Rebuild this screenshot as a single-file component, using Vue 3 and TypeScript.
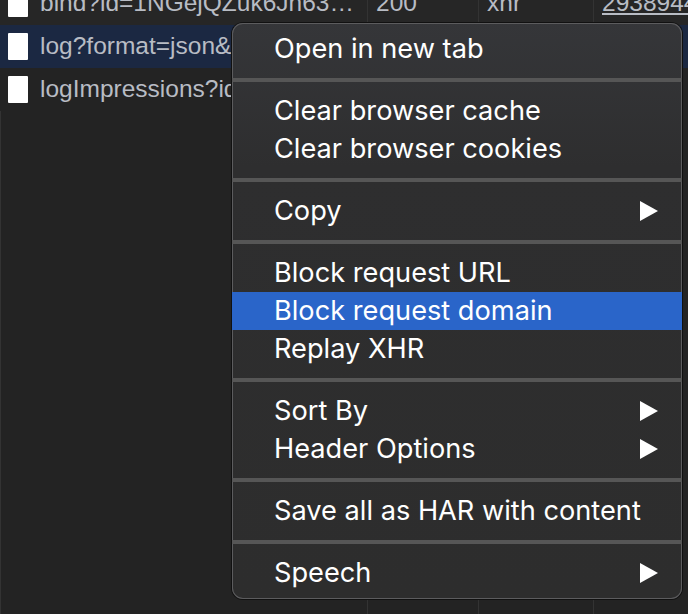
<script setup lang="ts">
interface Row { name: string; status: string; type: string; size: string; selected?: boolean }
interface Item { label: string; arrow?: boolean; active?: boolean }

const rows: Row[] = [
  { name: 'bind?id=1NGejQZuk6Jn63…', status: '200', type: 'xhr', size: '2938944' },
  { name: 'log?format=json&hasfast=true', status: '200', type: 'xhr', size: '4', selected: true },
  { name: 'logImpressions?id=1NGejQ', status: '200', type: 'xhr', size: '4' },
]

const groups: Item[][] = [
  [{ label: 'Open in new tab' }],
  [{ label: 'Clear browser cache' }, { label: 'Clear browser cookies' }],
  [{ label: 'Copy', arrow: true }],
  [{ label: 'Block request URL' }, { label: 'Block request domain', active: true }, { label: 'Replay XHR' }],
  [{ label: 'Sort By', arrow: true }, { label: 'Header Options', arrow: true }],
  [{ label: 'Save all as HAR with content' }],
  [{ label: 'Speech', arrow: true }],
]
</script>

<template>
  <div class="page">
    <div class="table">
      <div v-for="r in rows" :key="r.name" class="row" :class="{ selected: r.selected }">
        <div class="cell name"><span class="doc"></span><span class="nm">{{ r.name }}</span></div>
        <div class="cell">{{ r.status }}</div>
        <div class="cell">{{ r.type }}</div>
        <div class="cell"><span class="link">{{ r.size }}</span></div>
      </div>
      <div class="row filler">
        <div class="cell"></div><div class="cell"></div><div class="cell"></div><div class="cell"></div>
      </div>
    </div>
    <div class="menu">
      <div v-for="(g, i) in groups" :key="i" class="group">
        <div v-for="it in g" :key="it.label" class="item" :class="{ active: it.active }">
          <span class="label">{{ it.label }}</span>
          <svg v-if="it.arrow" class="arrow" width="18" height="20" viewBox="0 0 18 20"><path d="M0 0L18 10L0 20Z" fill="#fff" /></svg>
        </div>
      </div>
    </div>
  </div>
</template>

<style>
html, body { margin: 0; background: #232323; }
</style>

<style scoped>
.page {
  position: relative;
  width: 688px;
  height: 614px;
  overflow: hidden;
  background: #232323;
  font-family: Inter, "Liberation Sans", sans-serif;
}
.table {
  display: flex;
  flex-direction: column;
  height: 632px;
  margin-top: -18px;
  font-family: "Liberation Sans", Arial, sans-serif;
}
.row {
  display: grid;
  grid-template-columns: 367px 111px 115px 95px;
  height: 43px;
  flex: none;
  background: #262626;
  color: #b8bcc4;
  font-size: 24.5px;
  line-height: 41px;
}
.row:nth-child(3) { background: #232323; }
.row.selected { background: #1b2842; }
.row.filler { flex: 1; background: #232323; }
.cell {
  padding-left: 8px;
  border-left: 1px solid #333;
  white-space: nowrap;
  overflow: hidden;
}
.cell.name {
  display: flex;
  align-items: center;
  gap: 12px;
  padding-left: 8px;
  border-left: 0;
}
.nm { overflow: hidden; position: relative; top: -1px; }
.doc {
  width: 20px;
  height: 27px;
  flex: none;
  background: #fff;
  border-radius: 1px;
}
.link { text-decoration: underline; }
.menu {
  position: absolute;
  left: 232px;
  top: 23px;
  width: 450px;
  height: 576px;
  box-sizing: border-box;
  padding-top: 7px;
  background: linear-gradient(#353639, #2e2e2f 25%, #2d2d2d);
  border-radius: 11px;
  box-shadow: inset 0 0 0 1px #5c5c5e, 0 0 0 1px #111;
  color: #fff;
  font-size: 27.2px;
}
.group { padding: 0 0 10px; }
.group + .group {
  border-top: 4px solid #565656;
  padding-top: 10px;
}
.group:last-child { padding-bottom: 0; }
.item {
  display: flex;
  align-items: center;
  justify-content: space-between;
  height: 38px;
  padding: 0 24px 0 42px;
  white-space: nowrap;
}
.label { position: relative; top: -1px; }
.item.active { background: #2a65c9; }
.arrow { flex: none; }
</style>
